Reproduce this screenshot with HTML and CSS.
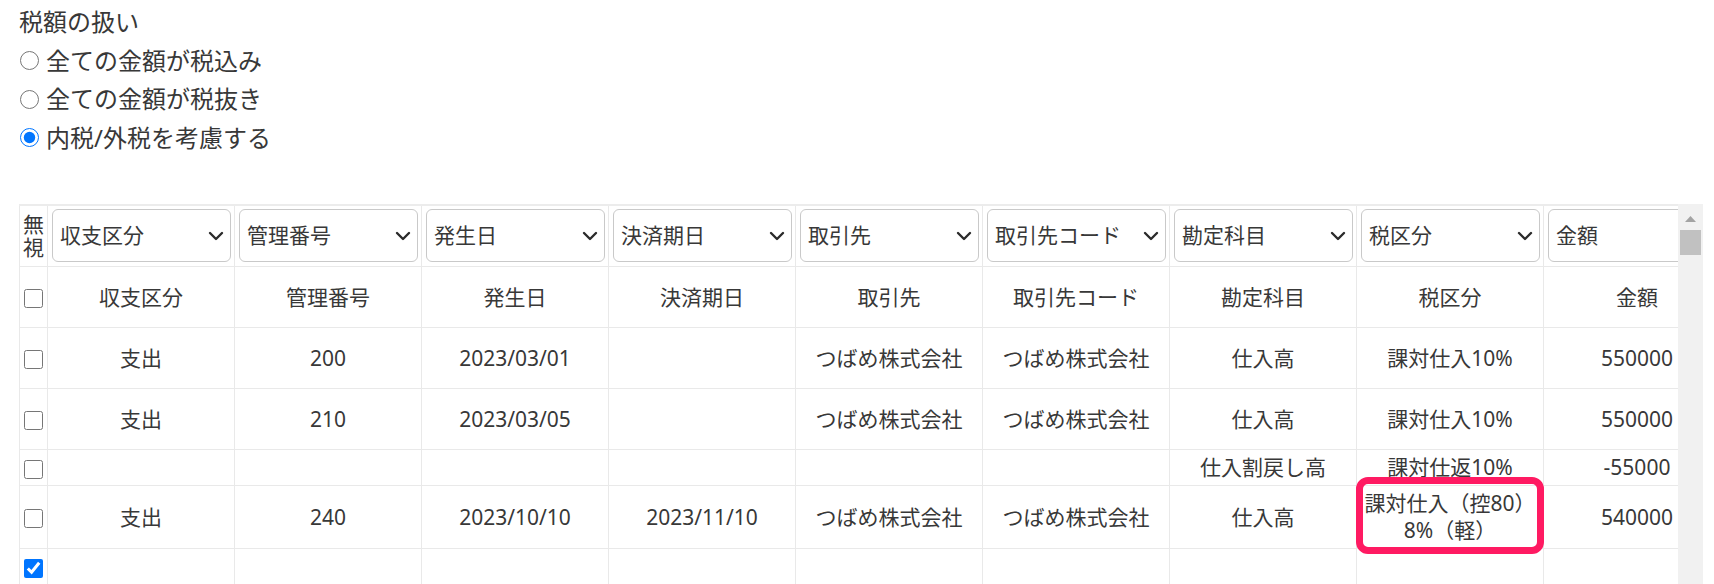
FILE: index.html
```html
<!DOCTYPE html>
<html lang="ja">
<head>
  <meta charset="UTF-8">
  <meta name="viewport" content="width=device-width, initial-scale=1.0"/>
  <title>仕訳インポート</title>
  <link rel="stylesheet" href="styles.css">
</head>
<body>

  <div class="tax-mode">
    <p class="tax-title">税額の扱い</p>
    <label class="tax-option"><input type="radio" name="taxMode" value="included">全ての金額が税込み</label>
    <label class="tax-option"><input type="radio" name="taxMode" value="excluded">全ての金額が税抜き</label>
    <label class="tax-option"><input type="radio" name="taxMode" value="mixed" checked>内税/外税を考慮する</label>
  </div>

  <div class="grid-frame">
    <div class="grid-viewport">
      <table class="import-grid">
        <colgroup>
          <col class="col-skip">
          <col span="9" class="col-data">
        </colgroup>
        <thead>
          <tr class="map-row">
            <th class="skip-head">無視</th>
            <th><div class="select-box"><select><option>収支区分</option></select><svg class="chev" viewBox="0 0 16 16"><path d="M2 5l6 6 6-6"/></svg></div></th>
            <th><div class="select-box"><select><option>管理番号</option></select><svg class="chev" viewBox="0 0 16 16"><path d="M2 5l6 6 6-6"/></svg></div></th>
            <th><div class="select-box"><select><option>発生日</option></select><svg class="chev" viewBox="0 0 16 16"><path d="M2 5l6 6 6-6"/></svg></div></th>
            <th><div class="select-box"><select><option>決済期日</option></select><svg class="chev" viewBox="0 0 16 16"><path d="M2 5l6 6 6-6"/></svg></div></th>
            <th><div class="select-box"><select><option>取引先</option></select><svg class="chev" viewBox="0 0 16 16"><path d="M2 5l6 6 6-6"/></svg></div></th>
            <th><div class="select-box"><select><option>取引先コード</option></select><svg class="chev" viewBox="0 0 16 16"><path d="M2 5l6 6 6-6"/></svg></div></th>
            <th><div class="select-box"><select><option>勘定科目</option></select><svg class="chev" viewBox="0 0 16 16"><path d="M2 5l6 6 6-6"/></svg></div></th>
            <th><div class="select-box"><select><option>税区分</option></select><svg class="chev" viewBox="0 0 16 16"><path d="M2 5l6 6 6-6"/></svg></div></th>
            <th><div class="select-box"><select><option>金額</option></select><svg class="chev" viewBox="0 0 16 16"><path d="M2 5l6 6 6-6"/></svg></div></th>
          </tr>
          <tr class="tall">
            <td><input type="checkbox"></td>
            <td>収支区分</td>
            <td>管理番号</td>
            <td>発生日</td>
            <td>決済期日</td>
            <td>取引先</td>
            <td>取引先コード</td>
            <td>勘定科目</td>
            <td>税区分</td>
            <td>金額</td>
          </tr>
        </thead>
        <tbody>
          <tr class="tall">
            <td><input type="checkbox"></td>
            <td>支出</td>
            <td>200</td>
            <td>2023/03/01</td>
            <td></td>
            <td>つばめ株式会社</td>
            <td>つばめ株式会社</td>
            <td>仕入高</td>
            <td>課対仕入10%</td>
            <td>550000</td>
          </tr>
          <tr class="tall">
            <td><input type="checkbox"></td>
            <td>支出</td>
            <td>210</td>
            <td>2023/03/05</td>
            <td></td>
            <td>つばめ株式会社</td>
            <td>つばめ株式会社</td>
            <td>仕入高</td>
            <td>課対仕入10%</td>
            <td>550000</td>
          </tr>
          <tr>
            <td><input type="checkbox"></td>
            <td></td>
            <td></td>
            <td></td>
            <td></td>
            <td></td>
            <td></td>
            <td>仕入割戻し高</td>
            <td>課対仕返10%</td>
            <td>-55000</td>
          </tr>
          <tr>
            <td><input type="checkbox"></td>
            <td>支出</td>
            <td>240</td>
            <td>2023/10/10</td>
            <td>2023/11/10</td>
            <td>つばめ株式会社</td>
            <td>つばめ株式会社</td>
            <td>仕入高</td>
            <td class="marked">課対仕入（控80）<br>8%（軽）<span class="tax-mark"></span></td>
            <td>540000</td>
          </tr>
          <tr>
            <td><input type="checkbox" checked></td>
            <td></td>
            <td></td>
            <td></td>
            <td></td>
            <td></td>
            <td></td>
            <td></td>
            <td></td>
            <td></td>
          </tr>
        </tbody>
      </table>
    </div>

    <div class="grid-scroll">
      <svg class="scroll-up" viewBox="0 0 11 6"><polygon points="5.5,0 11,6 0,6"/></svg>
      <div class="scroll-thumb"></div>
    </div>
  </div>

</body>
</html>
```

FILE: styles.css
```css
:root {
  --fg: #383838;
  --line: #e9e9e9;
  --mark: #ff1a62;
}

* {
  margin: 0;
  padding: 0;
  box-sizing: border-box;
}

body {
  font-family: "Noto Sans", "Noto Sans CJK JP", sans-serif;
  color: var(--fg);
  background: #ffffff;
  padding: 3px 11px 0 19px;
  overflow: hidden;
}

.tax-mode {
  font-size: 24px;
  line-height: 38.5px;
}

.tax-option {
  display: flex;
  align-items: center;
  gap: 7px;
}

.tax-option input {
  width: 19px;
  height: 19px;
  margin: 0 0 0 1px;
}

.grid-frame {
  display: flex;
  margin-top: 47px;
  height: 420px;
}

.grid-viewport {
  flex: 1;
  overflow: hidden;
}

.import-grid {
  border-collapse: collapse;
  table-layout: fixed;
  width: 1711px;
  font-size: 21px;
  line-height: 27px;
}

.col-skip { width: 28px; }
.col-data { width: 187px; }

.import-grid th,
.import-grid td {
  border: 1px solid var(--line);
  padding: 4px;
  text-align: center;
  vertical-align: middle;
  font-weight: normal;
  white-space: nowrap;
}

.import-grid td:first-child {
  padding: 4px 0;
}

.import-grid input[type="checkbox"] {
  width: 19px;
  height: 19px;
  margin: 0;
  vertical-align: middle;
}

.map-row th {
  border-top: 2px solid #ececec;
  padding: 3px 3px 4px 4px;
}

.map-row .skip-head {
  white-space: normal;
  padding: 0 3px;
  line-height: 23px;
}

.select-box {
  position: relative;
}

.select-box select {
  appearance: none;
  display: block;
  width: 100%;
  height: 53px;
  padding: 0 30px 0 7px;
  font: inherit;
  font-size: 21px;
  color: var(--fg);
  background: #ffffff;
  border: 1px solid #c9c9c9;
  border-radius: 6px;
}

.chev {
  position: absolute;
  right: 7px;
  top: 50%;
  width: 16px;
  height: 16px;
  margin-top: -8px;
  fill: none;
  stroke: #2b2b2b;
  stroke-width: 2.4;
  stroke-linecap: round;
  stroke-linejoin: round;
  pointer-events: none;
}

.tall td {
  height: 61px;
}

.marked {
  position: relative;
}

.tax-mark {
  position: absolute;
  top: -9px;
  bottom: -6px;
  left: -1px;
  right: -1px;
  border: 7px solid var(--mark);
  border-radius: 12px;
  pointer-events: none;
}

.grid-scroll {
  width: 25px;
  background: #f1f1f1;
  display: flex;
  flex-direction: column;
  align-items: center;
}

.scroll-up {
  width: 11px;
  height: 6px;
  margin-top: 12px;
  fill: #a3a3a3;
}

.scroll-thumb {
  width: 21px;
  height: 25px;
  margin-top: 8px;
  background: #c1c1c1;
}
```
